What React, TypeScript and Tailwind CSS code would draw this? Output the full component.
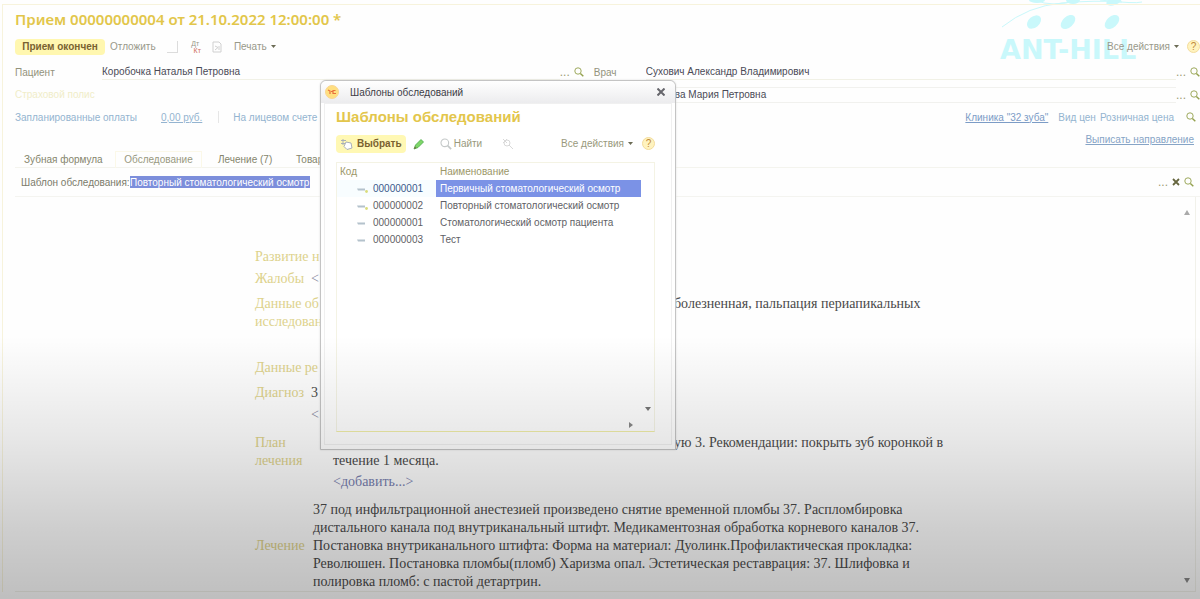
import React from "react";

function SearchIcon({ className = "h-[10px] w-[10px] text-[#93a04c]" }: { className?: string }) {
  return (
    <svg viewBox="0 0 10 10" className={`shrink-0 ${className}`} fill="none" stroke="currentColor">
      <circle cx="4" cy="4" r="3.2" strokeWidth=".9" />
      <path d="M6.400 6.400 9.300 9.300" strokeWidth="1.400" />
    </svg>
  );
}

function Caret() {
  return (
    <svg viewBox="0 0 5 3" className="h-[3px] w-[5px] shrink-0" fill="#6b6b55">
      <path d="M0 0h5L2.5 3z" />
    </svg>
  );
}

function HelpButton() {
  return (
    <button
      aria-label="?"
      className="flex h-[13px] w-[13px] shrink-0 items-center justify-center rounded-full border border-[#f3dc9c] bg-[#fff3bf] text-[10px] leading-none text-[#c08a3a]"
    >
      ?
    </button>
  );
}

function FieldButtons({ clear = false }: { clear?: boolean }) {
  return (
    <div className="flex shrink-0 items-center gap-1">
      <button className="text-[12px] leading-3 text-[#9c9c74]">...</button>
      {clear && (
        <button aria-label="×">
          <svg viewBox="0 0 8 8" className="h-2 w-2" stroke="#66663f" strokeWidth="1.8">
            <path d="M1 1l6 6M7 1L1 7" />
          </svg>
        </button>
      )}
      <button aria-label="…">
        <SearchIcon />
      </button>
    </div>
  );
}

function Logo() {
  return (
    <div className="pointer-events-none absolute top-0 right-[50px] w-[150px] text-[#c9f8fb]">
      <svg viewBox="0 0 150 36" className="block h-9 w-[150px]" fill="currentColor">
        <path d="M2 27Q28 6 62 3T122 2M35 0Q52 8 78 0M100 0Q135 4 142 2" fill="none" stroke="currentColor" strokeWidth="1" />
        <ellipse cx="34" cy="22" rx="8" ry="5.5" transform="rotate(-40 34 22)" />
        <ellipse cx="68" cy="22" rx="8.5" ry="5.5" transform="rotate(-42 68 22)" />
        <ellipse cx="112" cy="22" rx="8.5" ry="5.5" transform="rotate(-42 112 22)" />
        <ellipse cx="37" cy="0" rx="8" ry="3" />
        <ellipse cx="73" cy="0" rx="7" ry="4" />
        <ellipse cx="114" cy="1" rx="8" ry="4" transform="rotate(-20 114 1)" />
      </svg>
      <div className="font-['DejaVu_Sans',sans-serif] text-[27px] leading-7 font-bold whitespace-nowrap">ANT-HILL</div>
    </div>
  );
}

const templates = [
  { code: "000000001", name: "Первичный стоматологический осмотр", predefined: true },
  { code: "000000002", name: "Повторный стоматологический осмотр", predefined: true },
  { code: "000000001", name: "Стоматологический осмотр пациента", predefined: false },
  { code: "000000003", name: "Тест", predefined: false },
];

function TemplatesDialog() {
  return (
    <section
      role="dialog"
      aria-labelledby="dialog-title"
      className="absolute top-20 left-80 flex h-[370px] w-[356px] flex-col rounded-t-md border border-[#c4c4c4] bg-white pb-1 shadow-[0_0_2px_#d8d8d8]"
    >
      <header className="flex h-[22px] shrink-0 items-center rounded-t-md bg-gradient-to-b from-white to-[#ececee] pr-[10px] pl-1">
        <svg viewBox="0 0 14 14" className="h-[14px] w-[14px]">
          <circle cx="7" cy="7" r="6.5" fill="#ffdf80" stroke="#f9d590" />
          <path d="M3 5l2 1v3M6 6.500h2M10.500 5.500H8v3h3" fill="none" stroke="#e8703c" strokeWidth="1.2" />
        </svg>
        <span className="ml-[11px] flex-1 text-[#3c3c46]">Шаблоны обследований</span>
        <button aria-label="×">
          <svg viewBox="0 0 8 8" className="h-2 w-2" stroke="#66666c" strokeWidth="2">
            <path d="M.5.5l7 7M7.500.5l-7 7" />
          </svg>
        </button>
      </header>
      <div className="mx-[3px] flex flex-1 flex-col border border-[#f0f0f0] pr-4 pb-3 pl-[11px]">
        <h2 id="dialog-title" className="h-[26px] text-[15px] leading-[26px] font-bold text-[#e3c64c]">
          Шаблоны обследований
        </h2>
        <div className="flex h-[27px] items-center text-[#99997c]">
          <button className="flex h-[18px] items-center gap-1 rounded-sm bg-[#fff8b4] px-1 font-bold text-[#7a6230]">
            <svg viewBox="0 0 13 12" className="h-3 w-[13px]" fill="#fff" stroke="#aab0b8">
              <path d="M1 2.500h5M1 5.500h4M3 1v6M6 4l5 1 1 5-5 1.500-3-3z" />
            </svg>
            Выбрать
          </button>
          <button aria-label="✎" className="ml-[7px]">
            <svg viewBox="0 0 12 12" className="h-3 w-3">
              <path d="M1 11l1.500-4L8 1.500 10.500 4 5 9.500z" fill="#7fd668" stroke="#45a845" strokeWidth=".8" />
              <path d="M1 11l1-2.500L3.500 10z" fill="#7a6a40" />
            </svg>
          </button>
          <button className="ml-[15px] flex items-center gap-[2px]">
            <SearchIcon className="h-3 w-3 text-[#c5c9c9]" />
            Найти
          </button>
          <button aria-label="×" className="ml-5">
            <svg viewBox="0 0 12 12" className="h-3 w-3" fill="none" stroke="#d8d8d8">
              <circle cx="5" cy="5" r="3" />
              <path d="M7 7l4 4M1 1l4 4M5 1L1 5" />
            </svg>
          </button>
          <button className="ml-auto flex items-center gap-1">
            Все действия
            <Caret />
          </button>
          <span className="ml-[9px] flex">
            <HelpButton />
          </span>
        </div>
        <div className="mt-[5px] flex flex-1 flex-col border border-[#f4f3e4] border-b-[#f0eea8]">
          <table className="w-[304px] table-fixed border-collapse text-left">
            <thead>
              <tr className="h-[17px] text-[#9c9768]">
                <th className="w-[99px] pl-[3px] font-normal">Код</th>
                <th className="pl-1 font-normal">Наименование</th>
              </tr>
            </thead>
            <tbody className="text-[#5f5f66]">
              {templates.map((t, i) => (
                <tr key={i} className="h-[17px]">
                  <td className={i === 0 ? "bg-[#f8fdff] text-[#3a5a8c]" : ""}>
                    <div className="flex items-center pl-5">
                      <svg viewBox="0 0 12 8" className="mr-1 h-2 w-3">
                        <path d="M0 3.500h8v2H1z" fill="#b4c2cc" />
                        {t.predefined && <circle cx="9.500" cy="6.500" r="1.400" fill="#d9dc7c" />}
                      </svg>
                      {t.code}
                    </div>
                  </td>
                  <td className={i === 0 ? "bg-[#7b92e6] pl-1 whitespace-nowrap text-white" : "pl-1 whitespace-nowrap"}>
                    {t.name}
                  </td>
                </tr>
              ))}
            </tbody>
          </table>
          <div className="mt-auto flex flex-col items-end pr-[3px] pb-[3px]">
            <svg viewBox="0 0 6 4" className="h-1 w-[6px]" fill="#777">
              <path d="M0 0h6L3 4z" />
            </svg>
            <svg viewBox="0 0 4 6" className="mt-[11px] mr-[18px] h-[6px] w-1" fill="#888">
              <path d="M0 0v6l4-3z" />
            </svg>
          </div>
        </div>
      </div>
    </section>
  );
}

const label = "text-[#ddd28c]";

function Protocol() {
  return (
    <article className="flex-1 pt-[51px] pl-[240px] font-['Liberation_Serif',serif] text-[14px] leading-[18px] text-[#4a4a4a]">
      <p className={label}>Развитие н</p>
      <div className="mt-1 flex">
        <span className={`w-14 ${label}`}>Жалобы</span>
        <span className="text-[#8888a0]">&lt;</span>
      </div>
      <div className="mt-[7px] flex">
        <span className={`w-[72px] ${label}`}>
          Данные об исследован
        </span>
        <p className="pl-[347px]">болезненная, пальпация периапикальных</p>
      </div>
      <p className={`mt-7 ${label}`}>Данные ре</p>
      <div className="mt-[7px] flex">
        <span className={`w-14 ${label}`}>Диагноз</span>
        <span>3</span>
      </div>
      <p className="mt-1 pl-14 text-[#8888a0]">&lt;</p>
      <div className="mt-[10px] flex">
        <span className={`w-[78px] pr-5 ${label}`}>План лечения</span>
        <div>
          <p className="pl-[341px]">ую 3. Рекомендации: покрыть зуб коронкой в</p>
          <p>течение 1 месяца.</p>
          <a href="#add" className="mt-[3px] block text-[#7880b0]">
            &lt;добавить...&gt;
          </a>
        </div>
      </div>
      <div className="mt-[10px] flex items-center">
        <span className={`w-[58px] shrink-0 ${label}`}>Лечение</span>
        <p className="w-[640px]">
          37 под инфильтрационной анестезией произведено снятие временной пломбы 37. Распломбировка
          <br />
          дистального канала под внутриканальный штифт. Медикаментозная обработка корневого каналов 37.
          <br />
          Постановка внутриканального штифта: Форма на материал: Дуолинк.Профилактическая прокладка:
          <br />
          Революшен. Постановка пломбы(пломб) Харизма опал. Эстетическая реставрация: 37. Шлифовка и
          <br />
          полировка пломб: с пастой детартрин.
        </p>
      </div>
    </article>
  );
}

export default function App() {
  const link = "text-[#94b4d0]";
  return (
    <div className="relative flex min-h-screen flex-col overflow-hidden bg-[#fefefe] pt-1 pb-2 pl-[2px] font-['Liberation_Sans',sans-serif] text-[10px] text-[#7b7b6a]">
      <Logo />
      <main className="relative flex flex-1 flex-col border-t border-l border-[#f7f3dc] pl-3">
        <h1 className="h-7 font-['Noto_Sans',sans-serif] text-[15px] leading-7 font-semibold text-[#e2c64a]">Прием 00000000004 от 21.10.2022 12:00:00 *</h1>
        <div className="flex h-[27px] items-center text-[#99998a]">
          <button className="h-4 w-[90px] rounded-sm bg-[#fff7b0] font-bold text-[#7a6230]">Прием окончен</button>
          <button className="ml-[5px]">Отложить</button>
          <span className="ml-[11px] h-3 w-[11px] border-r border-b border-[#dcdcdc]" />
          <button className="ml-3 flex flex-col text-[7px] leading-[7px]">
            <span>Дт</span>
            <span className="pl-1 text-[#d07060]">Кт</span>
          </button>
          <svg viewBox="0 0 12 12" className="ml-[10px] h-3 w-3" fill="none" stroke="#d0d0d0">
            <path d="M2 1h6l2 2v8H2zM4 5l3 1.500L4 9M8 5v4" />
          </svg>
          <button className="ml-[11px] flex items-center gap-1">
            Печать
            <Caret />
          </button>
          <button className="ml-auto flex items-center gap-1">
            Все действия
            <Caret />
          </button>
          <span className="ml-2 flex">
            <HelpButton />
          </span>
        </div>

        <div className="flex h-6 items-center">
          <div className="flex w-[48%] items-center">
            <label htmlFor="patient" className="w-[87px] text-[#93937c]">Пациент</label>
            <input id="patient" defaultValue="Коробочка Наталья Петровна" className="h-4 min-w-0 flex-1 border-b border-[#f1f1e6] text-[#4a4a56] outline-none" />
            <FieldButtons />
          </div>
          <div className="ml-[10px] flex flex-1 items-center">
            <label htmlFor="doctor" className="w-[52px] text-[#93937c]">Врач</label>
            <input id="doctor" defaultValue="Сухович Александр Владимирович" className="h-4 min-w-0 flex-1 border-b border-[#f1f1e6] text-[#4a4a56] outline-none" />
            <FieldButtons />
          </div>
        </div>

        <div className="flex h-[21px] items-center">
          <span className="w-[48%] text-[#f0edc8]">Страховой полис</span>
          <div className="ml-[62px] flex flex-1 items-center">
            <input aria-label="ва Мария Петровна" defaultValue="ва Мария Петровна" className="h-4 min-w-0 flex-1 border-t border-b border-[#f1f1ee] pl-[29px] text-[#4a4a56] outline-none" />
            <FieldButtons />
          </div>
        </div>

        <div className={`flex h-6 items-center pr-1 ${link}`}>
          <span className="w-[146px]">Запланированные оплаты</span>
          <a href="#planned" className="underline">0,00 руб.</a>
          <span className="ml-4 h-3 w-px bg-[#e6e6e6]" />
          <span className="ml-[14px]">На лицевом счете</span>
          <div className="ml-auto flex items-center">
            <a href="#clinic" className="text-[#7c9cc6] underline">Клиника "32 зуба"</a>
            <span className="ml-[10px]">Вид цен</span>
            <span className="ml-1">Розничная цена</span>
            <span className="ml-3 flex">
              <SearchIcon />
            </span>
          </div>
        </div>
        <div className="mb-[2px] flex h-5 items-center justify-end pr-[6px]">
          <a href="#referral" className="text-[#86a4c6] underline">Выписать направление</a>
        </div>

        <nav role="tablist" className="flex h-[17px] items-center border-b border-[#f4f4ee] pl-[9px] text-[#85856c]">
          <button role="tab" className="w-[91px] text-left">Зубная формула</button>
          <button role="tab" aria-selected="true" className="h-[17px] w-[87px] border border-b-0 border-[#fbf8e8] text-[#99997f]">Обследование</button>
          <button role="tab" className="w-[94px] pl-4 text-left">Лечение (7)</button>
          <button role="tab">Товар</button>
        </nav>

        <div className="flex h-[29px] items-center border-b border-[#f4f4f0] pr-[6px] pl-[6px]">
          <label htmlFor="template" className="w-[109px] whitespace-nowrap">Шаблон обследования:</label>
          <div className="flex-1">
            <input id="template" defaultValue="Повторный стоматологический осмотр" className="h-3 w-[180px] bg-[#7c8edb] text-white outline-none" />
          </div>
          <FieldButtons clear />
        </div>

        <div className="mr-1 flex flex-1 border-r border-b border-[#f1f1ea]">
          <Protocol />
          <div className="flex w-4 flex-col items-center justify-between pt-[13px] pb-2">
            <svg viewBox="0 0 6 5" className="h-[5px] w-[6px]" fill="#aaa">
              <path d="M0 5h6L3 0z" />
            </svg>
            <svg viewBox="0 0 6 5" className="h-[5px] w-[6px]" fill="#888">
              <path d="M0 0h6L3 5z" />
            </svg>
          </div>
        </div>
      </main>
      <TemplatesDialog />
      <div className="pointer-events-none absolute inset-0 bg-[linear-gradient(to_bottom,transparent_56%,rgba(0,0,0,0.09)_73%,rgba(0,0,0,0.19)_88%,rgba(0,0,0,0.25)_100%)]" />
    </div>
  );
}
